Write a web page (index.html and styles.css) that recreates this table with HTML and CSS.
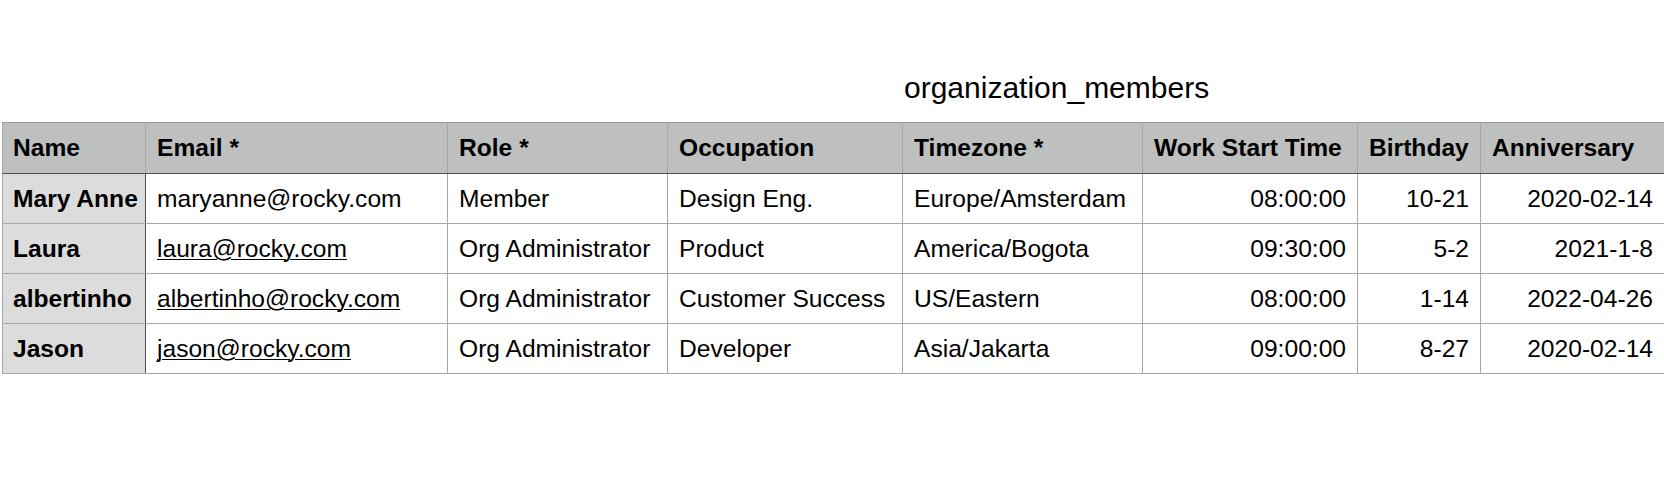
FILE: index.html
```html
<!DOCTYPE html>
<html lang="en">
<head>
<meta charset="utf-8">
<title>organization_members</title>
<link rel="stylesheet" href="styles.css">
</head>
<body>
<div class="page">
  <div class="title">organization_members</div>
  <table class="sheet">
    <colgroup>
      <col class="c-name">
      <col class="c-email">
      <col class="c-role">
      <col class="c-occ">
      <col class="c-tz">
      <col class="c-work">
      <col class="c-bday">
      <col class="c-anniv">
    </colgroup>
    <thead>
      <tr>
        <th class="name">Name</th>
        <th>Email *</th>
        <th>Role *</th>
        <th>Occupation</th>
        <th>Timezone *</th>
        <th>Work Start Time</th>
        <th>Birthday</th>
        <th>Anniversary</th>
      </tr>
    </thead>
    <tbody>
      <tr>
        <th class="name">Mary Anne</th>
        <td>maryanne@rocky.com</td>
        <td>Member</td>
        <td>Design Eng.</td>
        <td>Europe/Amsterdam</td>
        <td class="num">08:00:00</td>
        <td class="num">10-21</td>
        <td class="num">2020-02-14</td>
      </tr>
      <tr>
        <th class="name">Laura</th>
        <td><a class="link" href="#">laura@rocky.com</a></td>
        <td>Org Administrator</td>
        <td>Product</td>
        <td>America/Bogota</td>
        <td class="num">09:30:00</td>
        <td class="num">5-2</td>
        <td class="num">2021-1-8</td>
      </tr>
      <tr>
        <th class="name">albertinho</th>
        <td><a class="link" href="#">albertinho@rocky.com</a></td>
        <td>Org Administrator</td>
        <td>Customer Success</td>
        <td>US/Eastern</td>
        <td class="num">08:00:00</td>
        <td class="num">1-14</td>
        <td class="num">2022-04-26</td>
      </tr>
      <tr>
        <th class="name">Jason</th>
        <td><a class="link" href="#">jason@rocky.com</a></td>
        <td>Org Administrator</td>
        <td>Developer</td>
        <td>Asia/Jakarta</td>
        <td class="num">09:00:00</td>
        <td class="num">8-27</td>
        <td class="num">2020-02-14</td>
      </tr>
    </tbody>
  </table>
</div>
</body>
</html>
```

FILE: styles.css
```css
html, body {
  margin: 0;
  padding: 0;
  background: #ffffff;
}

body {
  font-family: "Liberation Sans", Arial, sans-serif;
  color: #000;
}

.page {
  padding: 0 0 0 2px;
}

.title {
  margin-top: 72px;
  padding-left: 902px;
  font-size: 30px;
  line-height: 32px;
  height: 32px;
  white-space: nowrap;
}

.sheet {
  margin-top: 18px;
  border-collapse: collapse;
  table-layout: fixed;
  width: 1662px;
  font-size: 24.6px;
  line-height: 28px;
}

.c-name { width: 143px; }
.c-email { width: 302px; }
.c-role { width: 220px; }
.c-occ { width: 235px; }
.c-tz { width: 240px; }
.c-work { width: 215px; }
.c-bday { width: 123px; }
.c-anniv { width: 184px; }

.sheet th,
.sheet td {
  border: 1px solid #a7a7a7;
  padding: 0 11px;
  height: 49px;
  white-space: nowrap;
  overflow: hidden;
  vertical-align: middle;
  text-align: left;
}

.sheet thead th {
  background: #bec0bf;
  font-weight: bold;
  height: 50px;
  border-top-color: #9c9c9c;
  border-bottom: 1px solid #505050;
}

.sheet tbody th.name {
  background: #dcdcdc;
  font-weight: bold;
  border-right: 1px solid #505050;
  padding: 0 0 0 10px;
}

.sheet thead th.name {
  padding-left: 10px;
}

.sheet td.num {
  text-align: right;
}

.link {
  color: #000;
  text-decoration: underline;
  text-underline-offset: 2px;
  text-decoration-thickness: 1px;
}
```
